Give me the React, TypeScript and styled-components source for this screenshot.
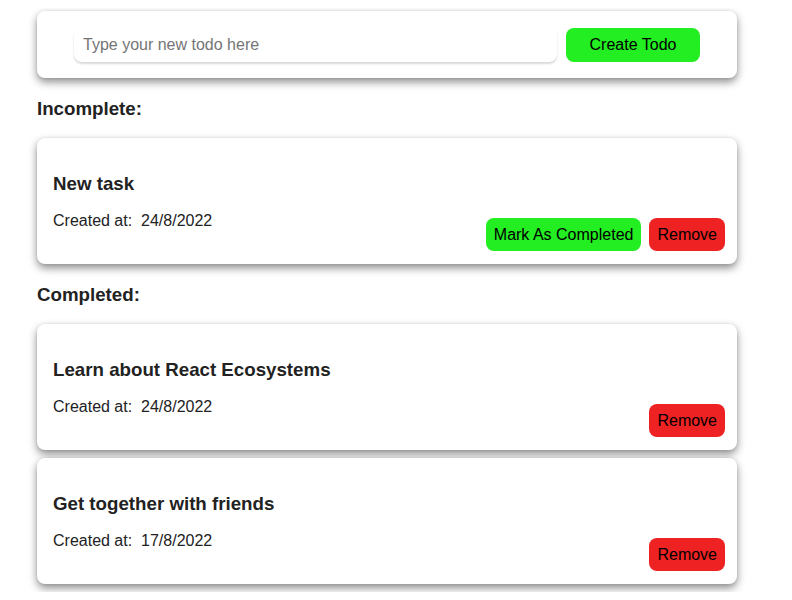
import React from "react";
import styled, { createGlobalStyle } from "styled-components";

const Global = createGlobalStyle`
  body {
    margin: 8px;
    background: #ffffff;
    font-family: "Liberation Sans", Arial, Helvetica, sans-serif;
    color: #222222;
  }
  * { box-sizing: border-box; }
`;

const Page = styled.div`
  width: 700px;
  margin: 3px 0 0 29px;
`;

const Card = styled.div`
  background: #fff;
  border-radius: 8px;
  box-shadow: 0 4px 8px rgba(0, 0, 0, 0.45), 0 0 3px rgba(0, 0, 0, 0.08);
`;

const FormCard = styled(Card)`
  display: flex;
  align-items: center;
  justify-content: center;
  gap: 9px;
  padding: 16px 0 16px;
  height: 67px;
`;

const Input = styled.input`
  width: 483px;
  height: 35px;
  border: none;
  outline: none;
  border-radius: 8px;
  padding: 0 9px;
  font-family: inherit;
  font-size: 16px;
  color: #222;
  background: #fff;
  box-shadow: 0 2px 2px rgba(0, 0, 0, 0.15);
  &::placeholder {
    color: #757575;
  }
`;

const Button = styled.button<{ $tone: "green" | "red" }>`
  border: none;
  border-radius: 8px;
  height: 33px;
  padding: 0 8px;
  font-family: inherit;
  font-size: 16px;
  color: #000;
  background: ${(p) => (p.$tone === "green" ? "#22ee22" : "#ee2222")};
  cursor: pointer;
`;

const CreateButton = styled(Button)`
  width: 134px;
  height: 34px;
`;

const SectionTitle = styled.h3`
  font-size: 18.72px;
  line-height: 22px;
  font-weight: bold;
  margin: 20px 0 18px;
  color: #222;
`;

const TodoCard = styled(Card)`
  padding: 16px 12px 13px 16px;
  margin-bottom: 8px;
`;

const TodoTitle = styled.h3`
  font-size: 18.72px;
  line-height: 21px;
  font-weight: bold;
  margin: 19px 0 18px;
  color: #222;
`;

const Footer = styled.div`
  display: flex;
  justify-content: space-between;
  align-items: flex-start;
`;

const Created = styled.p`
  margin: 0;
  font-size: 16px;
  line-height: 18px;
  color: #222;
`;

const Actions = styled.div`
  display: flex;
  gap: 8px;
  margin-top: 6px;
`;

type Todo = { text: string; date: string; done: boolean };

const todos: Todo[] = [
  { text: "New task", date: "24/8/2022", done: false },
  { text: "Learn about React Ecosystems", date: "24/8/2022", done: true },
  { text: "Get together with friends", date: "17/8/2022", done: true },
];

const TodoItem = ({ todo }: { todo: Todo }) => (
  <TodoCard>
    <TodoTitle>{todo.text}</TodoTitle>
    <Footer>
      <Created>Created at:&nbsp; {todo.date}</Created>
      <Actions>
        {!todo.done && <Button $tone="green">Mark As Completed</Button>}
        <Button $tone="red">Remove</Button>
      </Actions>
    </Footer>
  </TodoCard>
);

export default function App() {
  const incomplete = todos.filter((t) => !t.done);
  const complete = todos.filter((t) => t.done);
  return (
    <>
      <Global />
      <Page>
        <FormCard>
          <Input placeholder="Type your new todo here" />
          <CreateButton $tone="green">Create Todo</CreateButton>
        </FormCard>
        <SectionTitle>Incomplete:</SectionTitle>
        {incomplete.map((t) => (
          <TodoItem key={t.text} todo={t} />
        ))}
        <SectionTitle>Completed:</SectionTitle>
        {complete.map((t) => (
          <TodoItem key={t.text} todo={t} />
        ))}
      </Page>
    </>
  );
}
